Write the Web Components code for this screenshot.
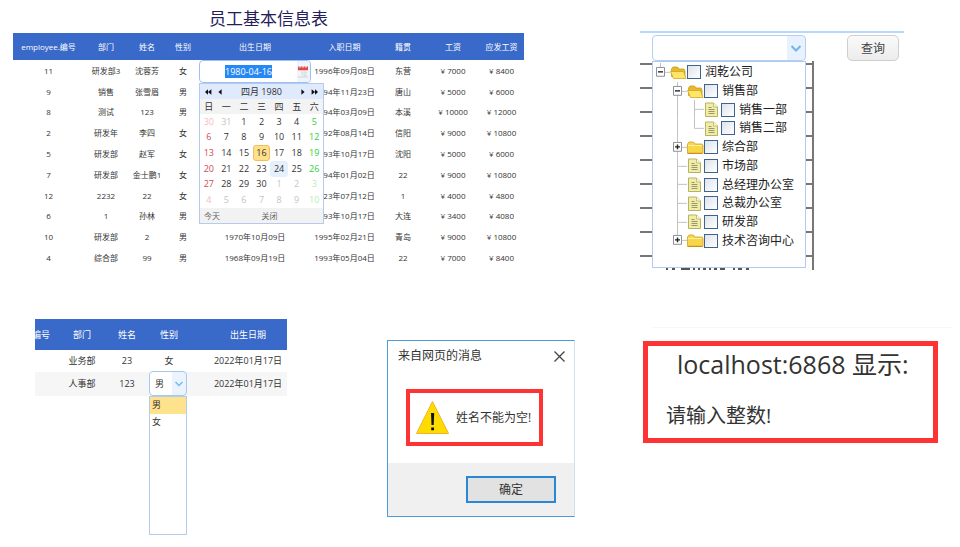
<!DOCTYPE html>
<html lang="zh-CN">
<head>
<meta charset="utf-8">
<title>员工基本信息表</title>
<style>
  html, body { margin: 0; background: #fff; }
  body { font-family: "Open Sans", "Noto Sans CJK SC", sans-serif; color: #333; }
</style>
</head>
<body>
<demo-board>
  <employee-table slot="top"></employee-table>
  <dept-picker slot="top"></dept-picker>
  <gender-table slot="bottom"></gender-table>
  <message-dialog slot="bottom" heading="来自网页的消息" action="确定">姓名不能为空!</message-dialog>
  <browser-alert slot="bottom" heading="localhost:6868 显示:">请输入整数!</browser-alert>
</demo-board>

<script>
class Base extends HTMLElement {
  connectedCallback() {
    if (this.shadowRoot) return;
    this.attachShadow({ mode: "open" }).innerHTML =
      `<style>*{box-sizing:border-box}button,input,select{font:inherit;color:inherit;margin:0}</style>` + this.view();
    this.ready();
  }
  ready() {}
}

class DemoBoard extends Base {
  view() { return `
<style>
  :host { display: block; min-height: 100vh; }
  .top { display: grid; grid-template-columns: 511fr 264fr; column-gap: 116px; padding: 0 56px 48px 13px; align-items: start; }
  .bottom { display: grid; grid-template-columns: minmax(0, 352fr) minmax(0, 256fr) minmax(0, 309fr); padding: 0 8px 0 35px; align-items: start; }
</style>
<div class="top"><slot name="top"></slot></div>
<div class="bottom"><slot name="bottom"></slot></div>`; }
}

class CalendarPopup extends Base {
  view() {
    const days = [30, 31, ...Array.from({ length: 30 }, (_, i) => i + 1), ...Array.from({ length: 10 }, (_, i) => i + 1)];
    const cells = days.map((d, i) => {
      const out = i < 2 || i > 31, c = i % 7;
      const cls = [out ? "out" : "", c === 0 ? "sun" : c === 6 ? "sat" : "", !out && d === 16 ? "sel" : "", !out && d === 24 ? "hover" : ""].join(" ");
      return `<button class="${cls}">${d}</button>`;
    }).join("");
    const arrow = (label, pts) => `<button aria-label="${label}"><svg width="8" height="8" viewBox="0 0 8 8">${pts.map(p => `<path d="${p}" fill="#111"/>`).join("")}</svg></button>`;
    return `
<style>
  :host { display: block; border: 1px solid #b4cbed; background: #fff; font-size: 9px; line-height: 12px; color: #333; }
  button { border: 0; background: none; padding: 0; line-height: 12px; }
  svg { display: block; }
  header { display: flex; align-items: center; gap: 4px; height: 15px; padding: 0 4px; background: #dfeafc; }
  header span { flex: 1; text-align: center; }
  .week { display: grid; grid-template-columns: repeat(7, 1fr); height: 15px; align-items: center; text-align: center; background: #f3f3f3; }
  .days { display: grid; grid-template: repeat(6, 1fr) / repeat(7, 1fr); height: 94px; }
  .days button { border: 1px solid transparent; border-radius: 3px; line-height: 12px; }
  .days .sun { color: #d14a55; }
  .days .sat { color: #2fd03a; }
  .days .out { color: #c4c4c4; }
  .days .out.sun { color: #f3bcbc; }
  .days .out.sat { color: #b4efb4; }
  .days .sel { background: #ffe08a; border-color: #f3bd5a; }
  .days .hover { background: #e6f0fd; }
  footer { display: grid; grid-template-columns: 24px 1fr 8px; height: 15px; align-items: center; background: #f2f2f2; font-size: 8px; color: #666; }
  .close { justify-self: center; }
</style>
<header>${arrow("上一年", ["M4 1.2v5.6L1 4z", "M7.4 1.2v5.6L4 4z"])}${arrow("上一月", ["M5.6 1.2v5.6L2.4 4z"])}<span>四月 1980</span>${arrow("下一月", ["M2.4 1.2v5.6L5.6 4z"])}${arrow("下一年", ["M4 1.2v5.6L7 4z", "M.6 1.2v5.6L4 4z"])}</header>
<div class="week">${[..."日一二三四五六"].map(d => `<span>${d}</span>`).join("")}</div>
<div class="days">${cells}</div>
<footer><button>今天</button><button class="close">关闭</button></footer>`;
  }
}

class DateField extends Base {
  view() { return `
<style>
  :host { display: block; }
  .field { display: flex; align-items: center; height: 23px; border: 1px solid #9dc0f0; border-radius: 4px; background: #fff; overflow: hidden; }
  input { flex: 1; min-width: 0; border: 0; outline: 0; padding: 0; background: none; text-align: center; font-size: 9px; line-height: 12px; height: 14px; }
  input::selection { background: #2688f5; color: #fff; }
  .field button { width: 13px; height: 21px; border: 0; padding: 0; background: #eef4fd; }
  svg { display: block; }
  calendar-popup { position: absolute; top: 23px; left: 0; width: 125px; }
</style>
<div class="field">
  <input aria-label="出生日期" value="1980-04-16">
  <button aria-label="选择日期"><svg width="12" height="13" viewBox="0 0 12 13"><path d="M1 1h10v11H1z" fill="#f4f4f4"/><path d="M1 12h10" stroke="#d8cfcf"/><path d="M1 1.6h10v3.6H1z" fill="#e04848"/><path d="M3 0v3M6 0v3M9 0v3" stroke="#fff" stroke-width=".8"/><path d="M4 7h1.2v3.5M7 7h2v3.5H7z" fill="none" stroke="#d3d3d8" stroke-width=".8"/></svg></button>
</div>
<calendar-popup></calendar-popup>`; }
  ready() {
    const input = this.shadowRoot.querySelector("input");
    input.focus({ preventScroll: true });
    input.select();
  }
}

class EmployeeTable extends Base {
  view() {
    const rows = [
      ["11", "研发部3", "沈蓉芳", "女", null, "1996年09月08日", "东营", "7000", "8400"],
      ["9", "销售", "张雪眉", "男", "", "1994年11月23日", "唐山", "5000", "6000"],
      ["8", "测试", "123", "男", "", "1994年03月09日", "本溪", "10000", "12000"],
      ["2", "研发年", "李四", "女", "", "1992年08月14日", "信阳", "9000", "10800"],
      ["5", "研发部", "赵军", "女", "", "1993年10月17日", "沈阳", "5000", "6000"],
      ["7", "研发部", "金士鹏1", "女", "", "1994年01月02日", "22", "9000", "10800"],
      ["12", "2232", "22", "女", "", "2023年07月12日", "1", "4000", "4800"],
      ["6", "1", "孙林", "男", "", "1993年10月17日", "大连", "3400", "4080"],
      ["10", "研发部", "2", "男", "1970年10月09日", "1995年02月21日", "青岛", "9000", "10800"],
      ["4", "综合部", "99", "男", "1968年09月19日", "1993年05月04日", "22", "7000", "8400"]];
    const heads = ["employee.编号", "部门", "姓名", "性别", "出生日期", "入职日期", "籍贯", "工资", "应发工资"];
    const widths = [71, 44, 38, 34, 110, 69, 48, 52, 45];
    return `
<style>
  :host { display: block; }
  h1 { margin: 0; height: 33px; padding-top: 7px; font-size: 17px; line-height: 24px; font-weight: 400; text-align: center; color: #241c5c; }
  table { width: 100%; height: 235px; table-layout: fixed; border-collapse: collapse; font-size: 8px; line-height: 12px; }
  th, td { padding: 0; text-align: center; white-space: nowrap; font-weight: 400; }
  th { background: #3969c9; color: #fff; height: 27px; }
  td { height: 20px; padding-top: 1px; }
  .edit { position: relative; }
  date-field { position: absolute; top: 0; left: -1px; right: -1px; z-index: 1; }
</style>
<h1>员工基本信息表</h1>
<table>
  <colgroup>${widths.map(w => `<col style="width:${w}px">`).join("")}</colgroup>
  <thead><tr>${heads.map(h => `<th>${h}</th>`).join("")}</tr></thead>
  <tbody>${rows.map(r => `<tr>${r.map((c, i) => c === null ? `<td class="edit"><date-field></date-field></td>` : `<td>${i > 6 ? "¥ " : ""}${c}</td>`).join("")}</tr>`).join("")}</tbody>
</table>`;
  }
}

class TreeRow extends Base {
  view() {
    const box = d => `<path d="M4.5 4.5h8v9h-8z" fill="#fff" stroke="#8a8f98"/><path d="${d}" stroke="#222" stroke-width="1.4"/>`;
    const shapes = {
      blank: "",
      line: `<path d="M8.5 0v19"/>`,
      tee: `<path d="M8.5 0v19M8.5 9.5H18"/>`,
      elbow: `<path d="M8.5 0v9.5H18"/>`,
      root: `<path d="M8.5 0v5M13 9.5h5"/>` + box("M6 9h5"),
      minus: `<path d="M8.5 0v19M13 9.5h5"/>` + box("M6 9h5"),
      plus: `<path d="M8.5 0v19M13 9.5h5"/>` + box("M6 9h5M8.5 6.5v5"),
      last: `<path d="M8.5 0v5M13 9.5h5"/>` + box("M6 9h5M8.5 6.5v5")
    };
    const icons = {
      open: `<path d="M2.500 12.500V5l1.500-2h4.500L10 5h5l1 2v6z" fill="#e9b92c" stroke="#c99a1e" stroke-width=".8"/><path d="M1.500 7.500h13l2.500 7H4.500z" fill="#ffe668" stroke="#d1a524" stroke-width=".8"/>`,
      folder: `<path d="M1.500 14.500V5l1.500-2h4.500L9 5h7l1 1.200v8.300z" fill="#f9d548" stroke="#cfa026" stroke-width=".8"/><path d="M2 6.500h14" stroke="#fff0a0"/><path d="M2 14.300h14" stroke="#c08c18"/>`,
      file: `<path d="M2.500 2h8l4 4v9.500h-12z" fill="#efecac" stroke="#b9b35c"/><path d="M10.500 2v4h4" fill="#fbfae0" stroke="#b9b35c" stroke-width=".8"/><path d="M5.500 6.500h3M5.500 8.500h6M5.500 10.500h6M5.500 12.500h6" stroke="#9c9866"/>`
    };
    const cells = this.getAttribute("guides").split(" ").map(g =>
      `<svg class="guide" viewBox="1 0 17 19" preserveAspectRatio="none" fill="none" stroke="#c2c2c2">${shapes[g]}</svg>`).join("");
    return `
<style>
  :host { display: flex; min-height: 0; font-size: 12px; line-height: 18px; color: #222; }
  .guide { width: 17px; height: 100%; flex: none; }
  label { display: flex; align-items: center; white-space: nowrap; }
  .icon { width: 17px; height: 17px; flex: none; }
  input { appearance: none; width: 14px; height: 14px; margin: 0 4px 0 0; border: 1px solid #3f6390; background: linear-gradient(135deg, #dde3ea, #fff); }
</style>
${cells}<label><svg class="icon" viewBox="1 0 17 17">${icons[this.getAttribute("icon")]}</svg><input type="checkbox"><slot></slot></label>`;
  }
}

class DeptPicker extends Base {
  view() {
    const rows = [
      ["root", "open", "润乾公司"], ["blank minus", "open", "销售部"],
      ["blank line tee", "file", "销售一部"], ["blank line elbow", "file", "销售二部"],
      ["blank plus", "folder", "综合部"], ["blank tee", "file", "市场部"],
      ["blank tee", "file", "总经理办公室"], ["blank tee", "file", "总裁办公室"],
      ["blank tee", "file", "研发部"], ["blank last", "folder", "技术咨询中心"]];
    return `
<style>
  :host { display: block; padding-top: 31px; }
  .bar { display: flex; justify-content: space-between; border-top: 2px solid #b9d6fb; padding: 2px 5px 0 12px; height: 30px; }
  select { appearance: none; width: 154px; height: 26px; padding: 0 24px 0 6px; font-size: 12px; border: 1px solid #b4cff3; border-radius: 4px;
    background: url("data:image/svg+xml,%3Csvg xmlns='http://www.w3.org/2000/svg' width='18' height='24'%3E%3Cpath d='M0 0h18v24H0z' fill='%23e8f2fe'/%3E%3Cpath d='M4.5 10l4.5 4.5 4.5-4.5' fill='none' stroke='%2372b4ea' stroke-width='2'/%3E%3C/svg%3E") right center no-repeat #fff; }
  button { width: 52px; height: 26px; padding: 0; border: 1px solid #cfcfcf; border-radius: 5px; background: linear-gradient(#fafafa, #ececec); font-size: 12px; color: #444; }
  .sheet { width: 174px; height: 209px; padding-left: 12px; border-right: 2px solid #777;
    background: repeating-linear-gradient(#fff 0 2px, #777 2px 4px, #fff 4px 24px); }
  .panel { width: 154px; height: 207px; padding-top: 1px; border: 1px solid #b3c8f2; background: #fff; }
  .rows { display: grid; height: 187px; grid-template-rows: repeat(10, minmax(0, 1fr)); }
  .marks { display: block; margin-left: 13px; }
</style>
<div class="bar"><select aria-label="部门"><option></option></select><button>查询</button></div>
<div class="sheet"><div class="panel"><div class="rows">
${rows.map(([g, i, t]) => `<tree-row guides="${g}" icon="${i}">${t}</tree-row>`).join("")}
</div></div>
<svg class="marks" width="88" height="2"><path d="M1 1h2M7 1h3M16 1h9M28 1h2M33 1h2M38 1h3M44 1h2M49 1h3M55 1h5M68 1h2M73 1h4M81 1h3" stroke="#555" stroke-width="2"/></svg>
</div>`;
  }
}

class GenderSelect extends Base {
  view() { return `
<style>
  :host { display: block; font-size: 9px; line-height: 12px; text-align: left; }
  select { appearance: none; display: block; width: 100%; height: 25px; padding: 0 0 0 5px; border: 1px solid #a8c8f2; border-radius: 4px;
    background: url("data:image/svg+xml,%3Csvg xmlns='http://www.w3.org/2000/svg' width='14' height='23'%3E%3Cpath d='M0 0h14v23H0z' fill='%23eaf3fe'/%3E%3Cpath d='M3.5 10l3.5 3.5 3.5-3.5' fill='none' stroke='%2372bdf0' stroke-width='1.5'/%3E%3C/svg%3E") right center no-repeat #fff; }
  ul { list-style: none; margin: 0; padding: 0; height: 139px; border: 1px solid #b4cbed; background: #fff; }
  li { height: 17px; padding: 2px; }
  li[aria-selected=true] { background: #ffe28c; }
</style>
<select aria-label="性别"><option>男</option><option>女</option></select>
<ul role="listbox" aria-label="性别选项"><li role="option" aria-selected="true">男</li><li role="option" aria-selected="false">女</li></ul>`; }
}

class GenderTable extends Base {
  view() { return `
<style>
  :host { display: block; margin-right: 100px; padding-top: 1px; }
  .clip { overflow-x: clip; }
  .inner { margin: 0 -23px 0 -15px; }
  table { width: 100%; table-layout: fixed; border-collapse: collapse; font-size: 9px; line-height: 12px; }
  th, td { padding: 0; text-align: center; white-space: nowrap; font-weight: 400; }
  th { height: 31px; background: #3969c9; color: #fff; }
  td { height: 22px; }
  .alt td { height: 24px; background: #f6f6f6; }
  .edit { position: relative; }
  gender-select { position: absolute; top: -1px; left: -3px; right: -1px; z-index: 1; }
</style>
<div class="clip"><div class="inner"><table>
  <colgroup><col style="width:42px"><col style="width:40px"><col style="width:50px"><col style="width:34px"><col style="width:124px"></colgroup>
  <thead><tr><th>编号</th><th>部门</th><th>姓名</th><th>性别</th><th>出生日期</th></tr></thead>
  <tbody>
    <tr><td></td><td>业务部</td><td>23</td><td>女</td><td>2022年01月17日</td></tr>
    <tr class="alt"><td></td><td>人事部</td><td>123</td><td class="edit"><gender-select></gender-select></td><td>2022年01月17日</td></tr>
  </tbody>
</table></div></div>`; }
}

class MessageDialog extends Base {
  view() { return `
<style>
  :host { display: block; margin: 22px 68px 0 0; border: 1px solid #4f9bd9; border-right-color: #cfe0ee; font-size: 12px; line-height: 16px; background: #fff; }
  header { display: flex; justify-content: space-between; align-items: center; height: 30px; padding: 0 8px 0 10px; }
  header button { border: 0; padding: 0; background: none; }
  svg { display: block; flex: none; }
  .body { padding: 18px 31px 17px 18px; }
  .frame { display: flex; align-items: center; gap: 6px; height: 57px; padding-left: 5px; border: 4px solid #fe3434; white-space: nowrap; }
  footer { display: flex; justify-content: flex-end; padding: 13px 18px; background: #f0f0f0; }
  footer button { width: 90px; height: 27px; padding: 0; border: 2px solid #2c86d6; background: #e2e2e2; }
</style>
<header><span>${this.getAttribute("heading")}</span><button aria-label="关闭"><svg width="13" height="13" viewBox="0 0 13 13"><path d="M1.500 1.500l10 10M11.500 1.500l-10 10" stroke="#444" stroke-width="1.300"/></svg></button></header>
<div class="body"><div class="frame"><svg width="35" height="35" viewBox="0 0 35 35"><path d="M17.500 1.500L33.500 33.500h-32z" fill="#ffdc00" stroke="#f3b32a" stroke-linejoin="round"/><path d="M16 13h3.200l-.5 12h-2.200zM16.200 27.500h2.800v2.800h-2.800z" fill="#111"/></svg><slot></slot></div></div>
<footer><button>${this.getAttribute("action")}</button></footer>`; }
}

class BrowserAlert extends Base {
  view() { return `
<style>
  :host { display: block; }
  .rule { margin: 9px 0 13px 8px; border-top: 1px solid #f7f7f7; }
  .frame { height: 102px; margin-right: 14px; padding: 2px 0 0 18px; border: 5px solid #fe3434; white-space: nowrap; }
  h2 { margin: 0 0 22px 11px; font-size: 25px; line-height: 32px; font-weight: 400; }
  p { margin: 0; font-size: 20px; line-height: 28px; }
</style>
<div class="rule"></div>
<div class="frame"><h2>${this.getAttribute("heading")}</h2><p><slot></slot></p></div>`; }
}

for (const [name, cls] of Object.entries({
  "demo-board": DemoBoard, "calendar-popup": CalendarPopup, "tree-row": TreeRow, "gender-select": GenderSelect,
  "employee-table": EmployeeTable, "date-field": DateField, "dept-picker": DeptPicker, "gender-table": GenderTable,
  "message-dialog": MessageDialog, "browser-alert": BrowserAlert })) customElements.define(name, cls);
</script>
</body>
</html>
